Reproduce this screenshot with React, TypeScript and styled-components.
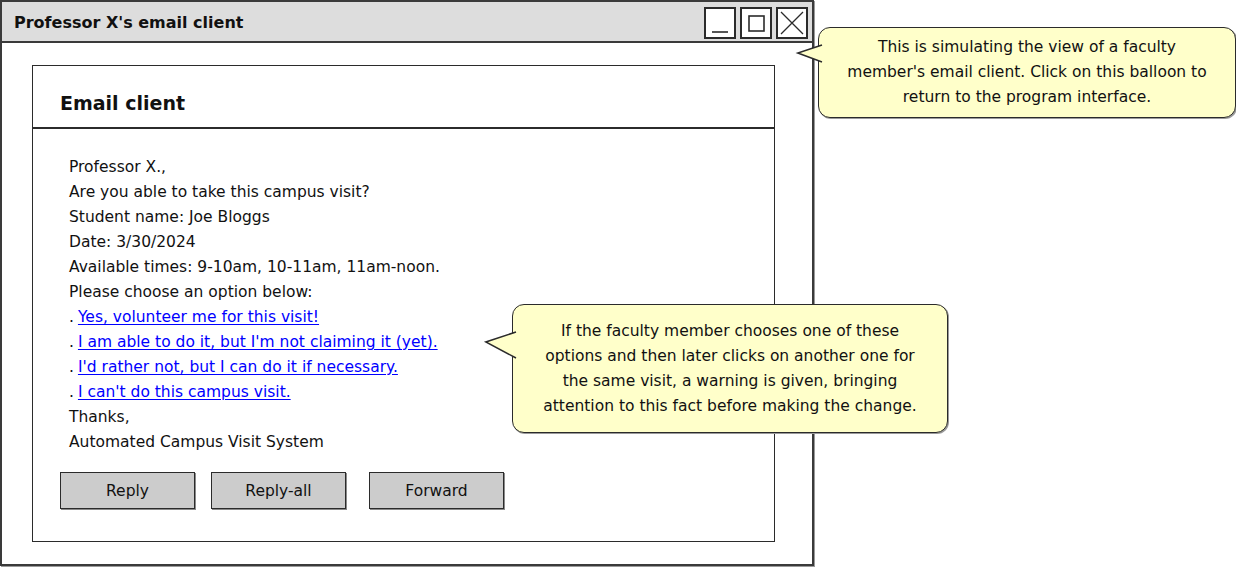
import React from 'react';
import styled, { createGlobalStyle } from 'styled-components';

const INK = '#2b2b2b';
const BALLOON = '#ffffca';
const FONT = '"DejaVu Sans", "Liberation Sans", sans-serif';

const GlobalStyle = createGlobalStyle`
  html, body {
    margin: 0;
    padding: 0;
    background: #ffffff;
  }
  body {
    font-family: ${FONT};
    color: #111111;
  }
`;

const options = [
  'Yes, volunteer me for this visit!',
  "I am able to do it, but I'm not claiming it (yet).",
  "I'd rather not, but I can do it if necessary.",
  "I can't do this campus visit.",
];

type TailProps = { depth: number; tipY: number; fromY: number; toY: number; boxHeight: number };

// pointer of a balloon, drawn in the balloon's own coordinates
const BalloonTail: React.FC<TailProps> = ({ depth, tipY, fromY, toY, boxHeight }) => {
  const w = depth + 4;
  return (
    <TailSvg $depth={depth} width={w} height={boxHeight} viewBox={`0 0 ${w} ${boxHeight}`}>
      <path
        d={`M${w} ${fromY} L0.8 ${tipY} L${w} ${toY}`}
        fill={BALLOON}
        stroke={INK}
        strokeWidth="1.5"
        strokeLinejoin="miter"
      />
    </TailSvg>
  );
};

const App: React.FC = () => {
  return (
    <>
      <GlobalStyle />
      <Page>
        <Window>
          <TitleBar>
            <TitleText>Professor X's email client</TitleText>
            <Controls>
              <ControlButton aria-label="minimize">
                <svg width="28" height="28" viewBox="0 0 28 28">
                  <line x1="6" y1="23" x2="22" y2="23" stroke={INK} strokeWidth="1.6" />
                </svg>
              </ControlButton>
              <ControlButton aria-label="maximize">
                <svg width="28" height="28" viewBox="0 0 28 28">
                  <rect x="7" y="7" width="15" height="15" fill="none" stroke={INK} strokeWidth="1.6" />
                </svg>
              </ControlButton>
              <ControlButton aria-label="close">
                <svg width="28" height="28" viewBox="0 0 28 28">
                  <path d="M3 3 L25 25 M25 3 L3 25" stroke={INK} strokeWidth="1.3" />
                </svg>
              </ControlButton>
            </Controls>
          </TitleBar>

          <WindowBody>
            <Panel>
              <PanelHeader>Email client</PanelHeader>
              <PanelBody>
                <Message>
                  <Line>Professor X.,</Line>
                  <Line>Are you able to take this campus visit?</Line>
                  <Line>Student name: Joe Bloggs</Line>
                  <Line>Date: 3/30/2024</Line>
                  <Line>Available times: 9-10am, 10-11am, 11am-noon.</Line>
                  <Line>Please choose an option below:</Line>
                  {options.map((text) => (
                    <Line key={text}>
                      <Bullet>.</Bullet>
                      <OptionLink href="#">{text}</OptionLink>
                    </Line>
                  ))}
                  <Line>Thanks,</Line>
                  <Line>Automated Campus Visit System</Line>
                </Message>
                <ButtonRow>
                  <ActionButton>Reply</ActionButton>
                  <ActionButton>Reply-all</ActionButton>
                  <ActionButton $nudge={7}>Forward</ActionButton>
                </ButtonRow>
              </PanelBody>
            </Panel>
          </WindowBody>
        </Window>

        <Balloon $left={818} $top={27} $width={418} $height={91}>
          <BalloonTail depth={21} tipY={26} fromY={18} toY={35} boxHeight={91} />
          This is simulating the view of a faculty
          <br />
          member's email client. Click on this balloon to
          <br />
          return to the program interface.
        </Balloon>

        <Balloon $left={512} $top={304} $width={436} $height={129}>
          <BalloonTail depth={27} tipY={38} fromY={28} toY={54} boxHeight={129} />
          If the faculty member chooses one of these
          <br />
          options and then later clicks on another one for
          <br />
          the same visit, a warning is given, bringing
          <br />
          attention to this fact before making the change.
        </Balloon>
      </Page>
    </>
  );
};

const Page = styled.div`
  position: relative;
  width: 1236px;
  height: 567px;
  overflow: hidden;
`;

const Window = styled.div`
  box-sizing: border-box;
  width: 814px;
  height: 566px;
  border: 2px solid #3a3a3a;
  box-shadow: 1px 1px 0 #9a9a9a;
  display: flex;
  flex-direction: column;
`;

const TitleBar = styled.div`
  box-sizing: border-box;
  height: 41px;
  background: #dddddd;
  border-bottom: 2px solid #3a3a3a;
  display: flex;
  align-items: center;
  justify-content: space-between;
  padding: 0 3px 0 12px;
`;

const TitleText = styled.span`
  font-weight: bold;
  font-size: 16px;
  color: #111111;
  margin-top: 2px;
`;

const Controls = styled.div`
  display: flex;
  gap: 4px;
  margin-top: 2px;
  margin-right: 1px;
`;

const ControlButton = styled.div`
  box-sizing: border-box;
  width: 32px;
  height: 32px;
  background: #ffffff;
  border: 2px solid ${INK};
  display: flex;
  align-items: center;
  justify-content: center;
`;

const WindowBody = styled.div`
  flex: 1;
  padding: 22px 0 0 30px;
`;

const Panel = styled.div`
  box-sizing: border-box;
  width: 743px;
  height: 477px;
  border: 1.5px solid ${INK};
  display: flex;
  flex-direction: column;
`;

const PanelHeader = styled.div`
  box-sizing: border-box;
  height: 63px;
  border-bottom: 2px solid ${INK};
  display: flex;
  align-items: center;
  padding: 12px 0 0 27px;
  font-weight: bold;
  font-size: 19px;
  color: #111111;
`;

const PanelBody = styled.div`
  padding: 26px 0 0 27px;
`;

const Message = styled.div`
  padding-left: 9px;
  font-size: 15.5px;
  line-height: 25px;
`;

const Line = styled.div`
  white-space: nowrap;
`;

const Bullet = styled.span`
  margin-right: 4px;
`;

const OptionLink = styled.a`
  color: #0000ff;
  text-decoration: underline;
  text-underline-offset: 2px;
`;

const ButtonRow = styled.div`
  display: flex;
  gap: 16px;
  margin-top: 17px;
`;

const ActionButton = styled.button<{ $nudge?: number }>`
  box-sizing: border-box;
  width: 135px;
  height: 37px;
  margin-left: ${(p) => p.$nudge ?? 0}px;
  background: #cccccc;
  border: 1.5px solid ${INK};
  box-shadow: 1px 1px 0 #8a8a8a;
  font-family: ${FONT};
  font-size: 15.5px;
  color: #111111;
  padding: 0;
`;

const Balloon = styled.div<{ $left: number; $top: number; $width: number; $height: number }>`
  position: absolute;
  left: ${(p) => p.$left}px;
  top: ${(p) => p.$top}px;
  width: ${(p) => p.$width}px;
  height: ${(p) => p.$height}px;
  box-sizing: border-box;
  background: ${BALLOON};
  border: 1.5px solid ${INK};
  border-radius: 12px;
  box-shadow: 1px 1px 0 #9a9a9a;
  display: flex;
  align-items: center;
  justify-content: center;
  padding: 0 8px;
  text-align: center;
  font-size: 15.5px;
  line-height: 25px;
  white-space: nowrap;
  color: #111111;
`;

const TailSvg = styled.svg<{ $depth: number }>`
  position: absolute;
  left: ${(p) => -p.$depth - 1.5}px;
  top: -1.5px;
  overflow: visible;
`;

export default App;
